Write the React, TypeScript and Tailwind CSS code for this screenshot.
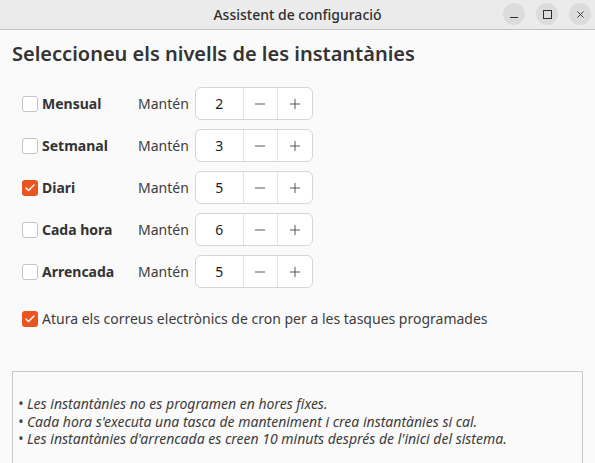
import { Check, Minus, Plus, X } from "lucide-react";

const levels = [
  { label: "Mensual", value: 2, checked: false },
  { label: "Setmanal", value: 3, checked: false },
  { label: "Diari", value: 5, checked: true },
  { label: "Cada hora", value: 6, checked: false },
  { label: "Arrencada", value: 5, checked: false },
];

function Checkbox({ checked }: { checked: boolean }) {
  return checked ? (
    <span className="w-4 h-4 rounded-[3px] bg-[#e95420] flex items-center justify-center shrink-0">
      <Check className="w-3 h-3 text-white" strokeWidth={3} />
    </span>
  ) : (
    <span className="w-4 h-4 rounded-[3px] border border-[#c4c4c4] bg-white shrink-0" />
  );
}

function SpinBox({ value }: { value: number }) {
  return (
    <div className="flex h-[33px] w-[118px] rounded-[6px] border border-[#d6d6d6] bg-white text-[14px] text-[#1d1d1d]">
      <div className="w-[47px] flex items-center justify-center">{value}</div>
      <button className="w-[35px] flex items-center justify-center border-l border-[#e3e3e3] text-[#3d3d3d]">
        <Minus className="w-4 h-4" strokeWidth={1.3} />
      </button>
      <button className="w-[35px] flex items-center justify-center border-l border-[#e3e3e3] text-[#3d3d3d]">
        <Plus className="w-4 h-4" strokeWidth={1.3} />
      </button>
    </div>
  );
}

export default function App() {
  return (
    <div
      className="w-[595px] h-[463px] overflow-hidden flex flex-col bg-[#fafafa] text-[#3d3d3d]"
      style={{ fontFamily: '"Noto Sans", "Open Sans", sans-serif' }}
    >
      {/* Title bar */}
      <header className="h-[30px] shrink-0 flex items-center bg-[#ebebeb] border-b border-[#c2c2c2] relative">
        <div className="flex-1 text-center text-[14px] font-medium text-[#2e2e2e]">
          Assistent de configuració
        </div>
        <div className="absolute right-[4px] top-[3px] flex gap-[11px]">
          <span className="w-[22px] h-[22px] rounded-full bg-[#dcdcdc] flex items-end justify-center pb-[7px]">
            <span className="w-[8px] h-[1.5px] bg-[#2e2e2e]" />
          </span>
          <span className="w-[22px] h-[22px] rounded-full bg-[#dcdcdc] flex items-center justify-center">
            <span className="w-[9px] h-[9px] border border-[#2e2e2e]" />
          </span>
          <span className="w-[22px] h-[22px] rounded-full bg-[#dcdcdc] flex items-center justify-center">
            <X className="w-[11px] h-[11px] text-[#2e2e2e]" strokeWidth={2} />
          </span>
        </div>
      </header>

      {/* Content */}
      <div className="px-3 pt-[11px]">
        <h1 className="text-[20px] font-semibold text-[#333] leading-[26px]">
          Seleccioneu els nivells de les instantànies
        </h1>

        <div className="mt-[20px] pl-[10px] flex flex-col gap-[9px]">
          {levels.map((l) => (
            <div key={l.label} className="flex items-center h-[33px]">
              <div className="w-[116px] flex items-center gap-[4px]">
                <Checkbox checked={l.checked} />
                <span className="text-[14px] font-bold text-[#333]">{l.label}</span>
              </div>
              <span className="w-[57px] text-[14px] text-[#3d3d3d]">Mantén</span>
              <SpinBox value={l.value} />
            </div>
          ))}
        </div>

        <div className="mt-[20px] pl-[10px] flex items-center gap-[4px]">
          <Checkbox checked />
          <span className="text-[14px] text-[#3d3d3d]">
            Atura els correus electrònics de cron per a les tasques programades
          </span>
        </div>

        <div className="mt-[42px] h-[120px] border border-[#c8c8c8] pl-[5px] pt-[23px] text-[14px] italic leading-[17.5px] text-[#3d3d3d]">
          <p>• Les instantànies no es programen en hores fixes.</p>
          <p>• Cada hora s'executa una tasca de manteniment i crea instantànies si cal.</p>
          <p>• Les instantànies d'arrencada es creen 10 minuts després de l'inici del sistema.</p>
        </div>
      </div>
    </div>
  );
}
